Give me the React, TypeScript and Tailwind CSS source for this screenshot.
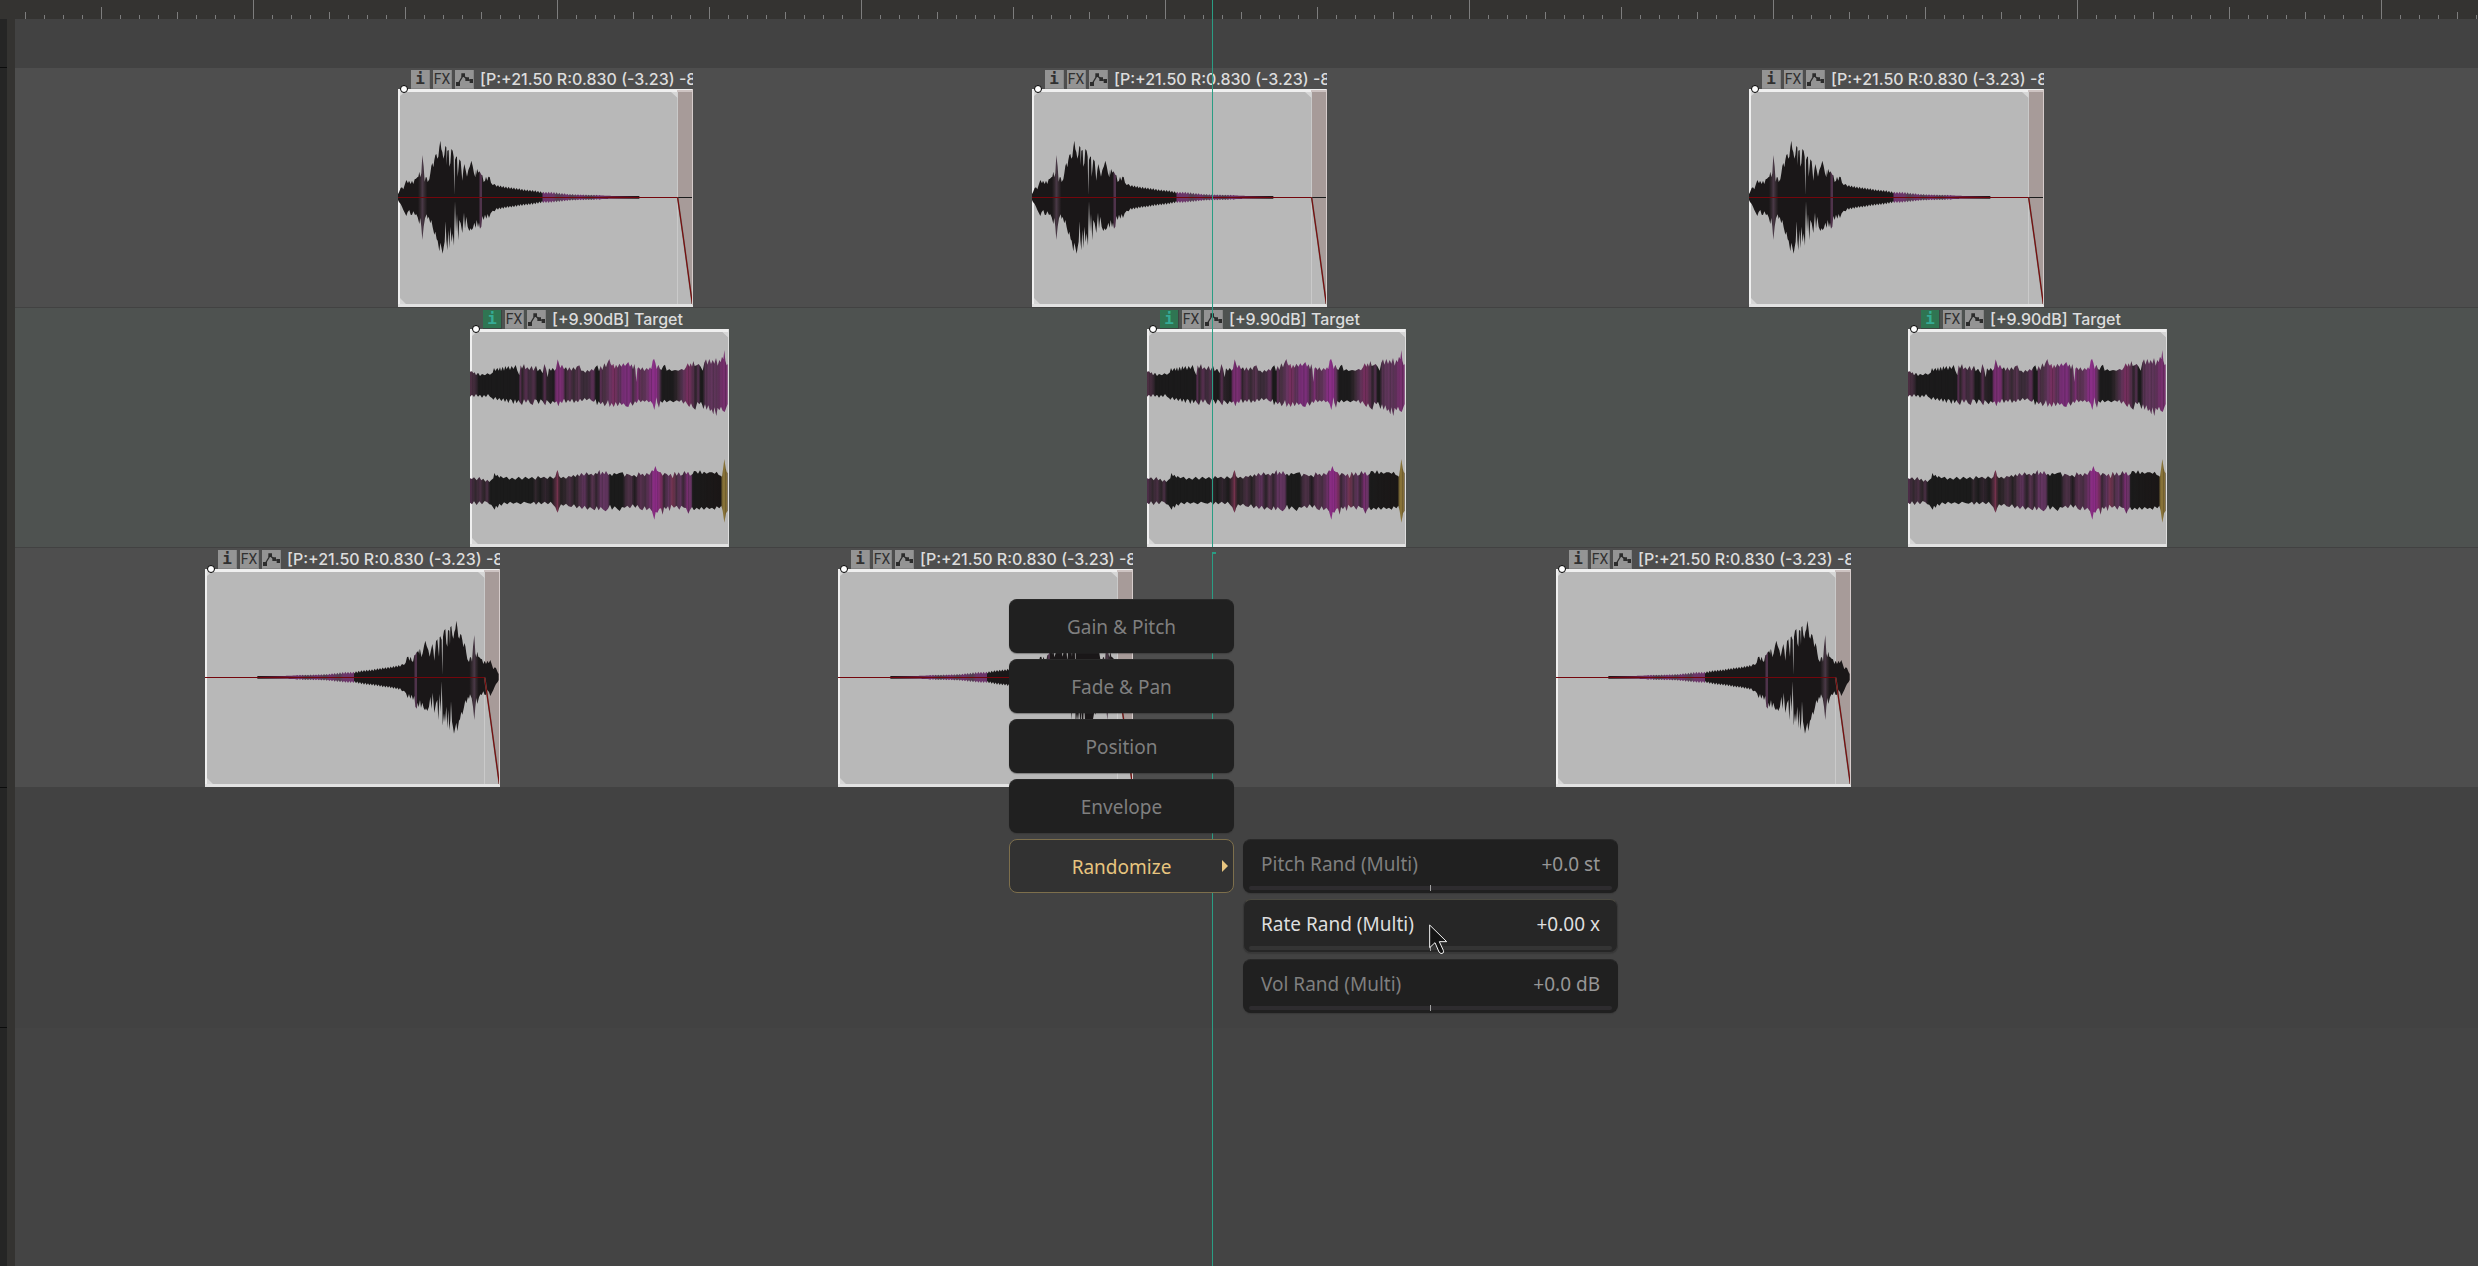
import { clsx } from 'clsx';

type ClipKind = 'impact' | 'reverse' | 'target';
type Stop = [number, string];

// Waveform outlines are "x,y" pairs in thirds of a pixel, the clip's top left corner is (54, 87)
const IMPACT_TOP =
  '54,402 57,397 62,384 66,382 70,388 74,375 79,360 84,370 87,362 92,372 96,362 100,372 104,358 108,356 112,352 115,350 118,335 121,352 124,340 127,285 131,320 134,365 137,352 140,352 143,366 148,358 151,340 154,318 157,309 160,322 163,300 166,285 169,282 172,296 175,290 178,262 181,242 184,268 187,276 190,296 193,285 196,258 199,262 200,315 202,272 206,270 208,320 211,310 214,267 218,272 221,290 223,404 225,300 229,289 231,292 233,350 235,330 238,298 242,304 247,362 250,330 253,312 257,330 261,350 265,330 270,318 274,302 278,318 282,340 286,352 288,328 290,345 292,326 295,338 298,334 301,338 304,344 307,346 311,366 315,362 318,350 322,362 325,350 329,351 333,368 338,375 344,372';
const IMPACT_BOTTOM =
  '54,420 57,426 62,432 66,440 70,450 75,460 79,468 83,456 88,450 92,464 96,465 100,454 105,465 109,463 113,472 118,492 121,474 124,500 127,540 131,500 135,475 140,463 143,477 146,470 151,490 154,480 158,502 163,524 166,515 170,538 173,542 178,574 181,548 184,562 188,581 191,562 194,545 197,484 199,540 202,571 205,510 208,565 211,500 215,547 218,520 222,557 223,500 225,424 228,516 231,462 235,541 238,480 242,490 247,519 252,458 255,507 259,470 263,500 268,513 272,505 275,511 279,504 283,488 287,504 290,480 294,502 297,488 300,506 304,500 307,468 311,480 315,464 319,476 323,462 327,474 332,460 338,452 344,454';

const LEFT_TOP =
  '60,215 66,214 70,220 74,217 78,226 84,218 90,228 96,222 105,226 112,220 120,224 128,218 132,204 136,213 142,204 146,212 150,202 153,214 158,200 162,212 166,198 170,208 175,198 180,210 185,198 190,207 197,195 202,212 208,226 212,196 216,206 222,192 226,208 232,202 238,210 245,198 250,212 258,197 263,214 270,206 278,220 283,192 288,206 293,232 297,205 303,212 308,204 314,212 318,206 323,178 327,192 331,204 336,194 342,208 348,202 353,212 358,202 364,212 370,202 376,210 380,200 388,196 394,212 400,212 406,218 412,210 418,215 425,207 430,212 436,202 442,196 447,214 452,198 457,210 463,190 468,202 472,190 478,177 482,192 486,197 490,191 494,206 498,194 503,203 508,191 514,200 520,190 525,198 530,192 535,186 540,200 545,193 549,208 553,192 556,208 559,246 562,206 566,202 572,210 577,202 583,213 590,204 595,210 600,202 604,208 608,182 612,176 616,188 620,207 625,194 630,207 634,210 640,198 645,194 650,212 658,208 665,213 675,210 685,212 695,207 702,211 708,202 713,190 718,200 722,190 726,200 730,183 734,198 740,196 746,192 752,200 758,212 763,188 768,178 772,194 778,177 783,192 788,180 793,191 798,174 803,197 808,180 812,187 816,170 820,178 823,150 826,182 830,196 833,192';
const LEFT_BOTTOM =
  '60,290 66,284 72,291 78,282 84,290 90,284 96,293 102,285 108,291 114,282 120,290 126,294 130,299 136,291 142,301 148,294 154,303 160,295 165,306 170,296 175,309 180,297 185,300 190,312 195,298 200,310 205,300 210,308 216,315 222,298 228,308 234,298 240,310 248,315 254,298 260,300 266,312 272,298 278,304 283,312 286,316 290,300 296,306 302,313 308,303 314,308 320,304 325,319 330,304 336,309 342,296 348,309 354,299 360,306 366,296 372,309 378,301 384,307 390,296 396,304 404,294 410,301 418,295 426,303 432,305 437,297 441,316 446,304 452,313 458,305 464,319 470,310 474,300 479,321 485,309 491,321 497,306 503,319 509,307 515,315 521,310 527,319 535,321 541,306 548,317 555,304 560,309 566,298 572,307 578,301 584,305 590,300 596,307 602,303 608,312 613,330 617,308 619,292 622,308 627,323 631,303 637,308 643,299 650,307 660,301 670,307 680,301 688,305 694,299 700,311 706,303 712,313 718,321 723,310 728,322 736,329 742,306 748,313 753,305 757,316 760,327 765,313 770,329 775,316 780,333 785,328 790,343 793,322 799,348 803,323 808,331 813,320 818,332 824,336 828,325 833,312';
const RIGHT_TOP =
  '60,535 66,537 72,532 80,541 88,531 94,541 100,536 106,545 112,539 118,546 124,540 130,535 133,519 138,529 142,524 148,533 152,528 160,535 170,530 178,539 186,533 196,539 206,530 216,539 226,530 236,537 246,531 256,539 264,528 272,535 282,530 292,537 300,529 310,536 316,530 320,516 323,510 327,528 333,535 340,530 348,536 356,528 364,531 370,525 376,531 382,523 388,529 394,519 402,527 410,517 416,525 424,521 430,527 436,519 442,522 448,510 452,525 457,515 463,523 468,513 475,525 480,521 486,528 492,519 500,523 508,519 518,517 524,530 530,521 538,524 546,529 552,525 560,532 566,517 572,525 578,521 584,529 590,519 598,525 606,511 611,514 616,498 621,512 627,516 632,517 638,527 644,519 650,522 656,528 662,521 668,535 674,515 680,527 686,517 692,527 698,524 703,513 709,523 714,515 720,527 728,522 732,513 738,514 744,521 750,511 756,523 762,515 770,521 778,517 786,517 794,521 800,515 806,525 812,527 816,530 820,500 823,477 827,505 830,515 833,520';
const RIGHT_BOTTOM =
  '60,608 66,613 72,604 80,615 88,604 96,613 104,603 112,607 118,613 124,614 128,620 134,629 138,617 143,623 148,611 154,617 162,607 172,613 180,605 190,611 200,607 212,613 222,605 232,609 242,611 252,605 258,614 266,605 274,613 284,605 294,613 302,605 310,615 316,622 320,632 323,638 327,625 333,613 340,617 348,611 356,619 364,621 372,613 380,625 388,617 396,627 404,617 412,629 420,621 428,627 434,631 440,619 446,631 452,621 460,629 467,634 474,626 480,614 486,629 494,619 502,627 509,633 516,621 524,623 532,617 540,625 548,613 556,623 562,615 570,627 577,631 584,619 590,631 598,623 606,634 613,659 617,636 622,638 628,626 633,625 638,644 642,621 648,627 654,619 659,633 664,614 672,623 680,617 688,629 694,617 702,623 708,624 715,641 720,630 726,621 732,631 740,623 748,629 754,621 762,629 770,621 778,627 786,623 794,629 800,619 808,625 814,617 818,632 823,668 828,640 833,632';

const IMPACT_STOPS: Stop[] = [
  [54, '#1a1718'], [114, '#1a1718'], [122, '#33292f'], [127, '#4a3947'], [134, '#33292f'], [142, '#1a1718'],
  [298, '#1a1718'], [299, '#4f334b'], [306, '#4f334b'], [307, '#1a1718'],
  [487, '#1a1718'], [488, '#6c336b'], [520, '#6a3768'], [532, '#503f50'], [560, '#6c336b'],
  [575, '#503f50'], [600, '#6c336b'], [630, '#4b3a4b'], [655, '#6c336b'], [700, '#5a1a3c'], [778, '#1a1718'],
];
const LEFT_STOPS: Stop[] = [
  [60, '#533248'], [78, '#3a2836'], [86, '#1b1a1b'], [206, '#1b1a1b'], [210, '#5b2f54'], [218, '#2d2529'],
  [226, '#5a3052'], [240, '#3a2a38'], [252, '#57324f'], [262, '#1b1a1b'], [276, '#1b1a1b'], [284, '#5a3052'],
  [292, '#2a2228'], [312, '#1f1b1e'], [318, '#7a2e72'], [338, '#7a2e72'], [346, '#33262f'], [360, '#583050'],
  [370, '#372a33'], [386, '#593451'], [396, '#3c2c3a'], [412, '#3c2c3a'], [430, '#5f3059'], [438, '#1a1a1a'],
  [447, '#1a1a1a'], [452, '#5c2f55'], [462, '#45303f'], [480, '#6b3765'], [492, '#7a2e60'], [506, '#5c3457'],
  [520, '#7b2e7a'], [540, '#7b2e7a'], [550, '#4a3045'], [562, '#7b2e72'], [574, '#57314e'], [590, '#6b3765'],
  [604, '#8b2e88'], [620, '#8b2e88'], [628, '#5c3457'], [636, '#1c1b1c'], [668, '#1c1b1c'], [682, '#33282f'],
  [698, '#5c3457'], [714, '#7a2e60'], [730, '#54304c'], [738, '#2a2228'], [744, '#5c3457'], [752, '#1c1b1c'],
  [758, '#1c1b1c'], [766, '#553350'], [782, '#63365e'], [800, '#5c3457'], [818, '#78306f'], [834, '#78306f'],
];
const RIGHT_STOPS: Stop[] = [
  [60, '#553050'], [76, '#33282f'], [90, '#4b3045'], [102, '#2d2529'], [112, '#4b3045'], [120, '#1b1b1b'],
  [248, '#1b1b1b'], [256, '#33282f'], [270, '#1b1b1b'], [286, '#332630'], [304, '#1b1b1b'], [316, '#4b2a3a'],
  [322, '#7a3450'], [332, '#252122'], [346, '#33282f'], [360, '#4b3045'], [374, '#252122'], [388, '#4b3045'],
  [402, '#633560'], [416, '#2b2329'], [428, '#593451'], [440, '#332630'], [452, '#633560'], [474, '#633560'],
  [480, '#1b1b1b'], [518, '#1b1b1b'], [530, '#4b3045'], [544, '#4b3045'], [554, '#1f1b1e'], [568, '#583050'],
  [586, '#4b3045'], [604, '#73306e'], [612, '#8e2c88'], [622, '#8e2c88'], [634, '#7a2e60'], [642, '#3a2836'],
  [656, '#633560'], [668, '#75344f'], [680, '#4b3045'], [692, '#633560'], [700, '#3a2836'], [712, '#7a2e72'],
  [724, '#633560'], [728, '#1b1b1b'], [812, '#1b1616'], [818, '#8a7438'], [829, '#8a7438'], [833, '#5f4f38'],
];

// The decaying tail keeps shrinking towards the middle line at y = 412
const TAIL: [number, number][] = [
  [350, 35], [380, 29], [400, 27], [430, 22], [460, 19], [487, 14], [510, 14], [540, 11], [570, 8], [600, 7], [650, 6], [700, 4], [740, 4], [778, 4],
];

function tail(direction: 1 | -1) {
  const points: string[] = [];
  for (let i = 0; i <= 107; i++) {
    const x = 350 + i * 4;
    const next = Math.max(1, TAIL.findIndex(([tx]) => tx >= x));
    const [x0, h0] = TAIL[next - 1];
    const [x1, h1] = TAIL[next];
    const height = h0 + ((h1 - h0) * (x - x0)) / (x1 - x0);
    const jag = x > 660 ? 0 : (i % 2 ? 1 : -1) * Math.min(3, height / 4);
    points.push(`${x},${412 + direction * (height + jag)}`);
  }
  return points.join(' ');
}

function outline(top: string, bottom: string) {
  return `${top} ${bottom.split(' ').reverse().join(' ')}`;
}

function Gradient({ id, stops }: { id: string; stops: Stop[] }) {
  const first = stops[0][0];
  const last = stops[stops.length - 1][0];
  return (
    <linearGradient id={id} gradientUnits="userSpaceOnUse" x1={first} x2={last} y1="0" y2="0">
      {stops.map(([x, color]) => (
        <stop key={x} offset={(x - first) / (last - first)} stopColor={color} />
      ))}
    </linearGradient>
  );
}

/** Shapes shared by all the clips, drawn with <use>. */
function WaveDefs() {
  const left = outline(LEFT_TOP, LEFT_BOTTOM);
  const right = outline(RIGHT_TOP, RIGHT_BOTTOM);
  return (
    <svg className="absolute size-0" aria-hidden="true">
      <defs>
        <Gradient id="impact-fill" stops={IMPACT_STOPS} />
        <Gradient id="left-fill" stops={LEFT_STOPS} />
        <Gradient id="right-fill" stops={RIGHT_STOPS} />
        <pattern id="streaks" width="37" height="900" patternUnits="userSpaceOnUse">
          <path d="M2 0h2v900h-2zM11 0h3v900h-3zM22 0h2v900h-2zM29 0h3v900h-3z" fill="#111" fillOpacity="0.25" />
        </pattern>
        <polygon
          id="impact-wave"
          points={outline(`${IMPACT_TOP} ${tail(-1)}`, `${IMPACT_BOTTOM} ${tail(1)}`)}
          fill="url(#impact-fill)"
        />
        <g id="target-wave">
          <polygon points={left} fill="url(#left-fill)" />
          <polygon points={left} fill="url(#streaks)" />
          <polygon points={right} fill="url(#right-fill)" />
          <polygon points={right} fill="url(#streaks)" />
        </g>
      </defs>
    </svg>
  );
}

function ImpactArt({ reversed }: { reversed: boolean }) {
  return (
    <svg viewBox="54 87 885 654" className="block h-[218px] w-[295px]" aria-hidden="true">
      <rect x="54" y="87" width="885" height="654" fill="#b8b8b8" />
      <path d="M891 87H936V732L892 412Z" fill="#a79b99" />
      <rect x="891" y="96" width="3" height="636" fill="#cacaca" />
      <path d="M60 96h14l-14 12zM60 732v-18l18 18zM873 96h20v18z" fill="#d6d6d6" />
      <path d="M54 87H939V96H60V741H54Z" fill="#efefef" />
      <use href="#impact-wave" transform={reversed ? 'translate(989 0) scale(-1 1)' : undefined} />
      {!reversed && <rect x="892" y="411" width="44" height="3" fill="#1c1c1c" />}
      <rect x="54" y="411" width="839" height="3" fill="#74060c" />
      <path d="M893 413L911 540L937 732" fill="none" stroke="#6d6258" strokeWidth="5" />
      <path d="M893 413L911 540L937 732" fill="none" stroke="#7c0509" strokeWidth="3" />
      <rect x="891" y="90" width="45" height="6" fill="#cdc3c2" />
      <rect x="54" y="732" width="885" height="9" fill="#e2e2e2" />
      <rect x="936" y="87" width="3" height="648" fill="#d6cccb" />
    </svg>
  );
}

function TargetArt() {
  return (
    <svg viewBox="60 87 777 654" className="block h-[218px] w-[259px]" aria-hidden="true">
      <rect x="60" y="87" width="777" height="654" fill="#b8b8b8" />
      <path d="M66 96h14l-14 12zM66 732v-18l18 18zM817 96h17v16z" fill="#d6d6d6" />
      <path d="M60 87H837V96H66V741H60Z" fill="#efefef" />
      <use href="#target-wave" />
      <rect x="60" y="732" width="777" height="9" fill="#e2e2e2" />
      <rect x="834" y="87" width="3" height="654" fill="#dedede" />
    </svg>
  );
}

const badge = 'flex size-[19px] shrink-0 items-center justify-center overflow-hidden border-r border-b';

function Clip({ kind, left }: { kind: ClipKind; left: number }) {
  const isTarget = kind === 'target';
  return (
    <article className={clsx('absolute top-0', isTarget ? 'w-[259px]' : 'w-[295px]')} style={{ left }}>
      <header className="flex h-[21px] items-end gap-[3px] overflow-hidden pr-px pl-[13px]">
        <button
          type="button"
          aria-label="Item info"
          className={clsx(
            badge,
            "font-['DejaVu_Sans_Mono',monospace] text-[16px] leading-4 font-bold",
            isTarget ? 'border-[#3c4441] bg-[#2f7552] text-[#35ab95]' : 'border-[#858585] bg-[#949494] text-[#303030]',
          )}
        >
          i
        </button>
        <button
          type="button"
          aria-label="Item effects"
          className={clsx(badge, 'border-[#858585] bg-[#949494] font-[Roboto,sans-serif] text-[14px] leading-4 text-[#303030]')}
        >
          FX
        </button>
        <button type="button" aria-label="Item envelopes" className={clsx(badge, 'border-[#858585] bg-[#949494]')}>
          <svg viewBox="0 0 57 57" className="size-[19px] shrink-0" aria-hidden="true">
            <path d="M9 42L24 17L38 28L50 33" fill="none" stroke="#2c2c2c" strokeWidth="4" />
            <path d="M3 36h12v12H3zM19 10h11v11H19zM31 22h11v11H31zM44 27h11v12H44z" fill="#2c2c2c" />
          </svg>
        </button>
        <h3 className="ml-[3px] text-[16px] leading-5 font-medium whitespace-nowrap text-[#dcdcdc]">
          {isTarget ? '[+9.90dB] Target' : '[P:+21.50 R:0.830 (-3.23) -8'}
        </h3>
      </header>
      {isTarget ? <TargetArt /> : <ImpactArt reversed={kind === 'reverse'} />}
      <span className="absolute top-[17px] left-[2px] size-2 rounded-full border border-black bg-white" />
    </article>
  );
}

const TRACKS: { name: string; kind: ClipKind; clips: number[]; className: string }[] = [
  { name: 'Track 1', kind: 'impact', clips: [383, 1017, 1734], className: 'bg-[#4e4e4e] border-[#424242]' },
  { name: 'Track 2', kind: 'target', clips: [455, 1132, 1893], className: 'bg-[#4e5250] border-[#424242]' },
  { name: 'Track 3', kind: 'reverse', clips: [190, 823, 1541], className: 'bg-[#4e4e4e] border-[#424242]' },
];

function Ruler() {
  return (
    <svg className="block h-[19px] w-full bg-[#343331]" aria-hidden="true">
      <defs>
        <pattern id="ticks" x="25" width="304" height="19" patternUnits="userSpaceOnUse">
          {Array.from({ length: 16 }, (_, i) => {
            const height = i === 12 ? 19 : i === 4 ? 12 : i % 8 === 0 ? 7 : 4;
            return <rect key={i} x={i * 19} y={19 - height} width="1" height={height} fill="#7d7d7d" />;
          })}
        </pattern>
      </defs>
      <rect x="25" width="100%" height="19" fill="url(#ticks)" />
    </svg>
  );
}

const MENU = ['Gain & Pitch', 'Fade & Pan', 'Position', 'Envelope', 'Randomize'];

function Menu() {
  return (
    <nav className="flex w-[225px] flex-col gap-[6px]">
      {MENU.map((label) => {
        const active = label === 'Randomize';
        return (
          <button
            key={label}
            type="button"
            className={clsx(
              'relative h-[54px] rounded-lg border pt-[2px] text-[19px] leading-6',
              active
                ? 'border-[#7d6f4c] bg-[#323232] text-[#e8c57f]'
                : 'border-[#202020] border-t-[#292929] bg-[#202020] text-[#7f7f7f] shadow-[0_1px_1px_#2a2a2a66]',
            )}
          >
            {label}
            {active && (
              <svg viewBox="0 0 6 12" className="absolute top-[20px] right-[5px] h-3 w-[6px]" aria-hidden="true">
                <path d="M0 0L6 6L0 12Z" fill="#e8c57f" />
              </svg>
            )}
          </button>
        );
      })}
    </nav>
  );
}

const SLIDERS = [
  { id: 'pitch', label: 'Pitch Rand (Multi)', value: '+0.0 st' },
  { id: 'rate', label: 'Rate Rand (Multi)', value: '+0.00 x', hover: true },
  { id: 'vol', label: 'Vol Rand (Multi)', value: '+0.0 dB' },
];

function RandomizePanel() {
  return (
    <div className="flex w-[375px] flex-col gap-[6px]">
      {SLIDERS.map(({ id, label, value, hover }) => (
        <div
          key={id}
          className={clsx(
            'flex h-[54px] flex-col rounded-lg border px-[5px] pt-3',
            hover
              ? 'border-[#383838] border-t-[#4b4a41] bg-[#262626] text-[#dedede] shadow-[0_1px_1px_#2a2a2a66]'
              : 'border-[#202020] border-t-[#292929] bg-[#202020] text-[#7f7f7f] shadow-[0_1px_1px_#2a2a2a66]',
          )}
        >
          <div className="flex justify-between px-3 text-[19px] leading-6">
            <label htmlFor={id}>{label}</label>
            <output htmlFor={id} className={hover ? 'text-[#dedede]' : 'text-[#979797]'}>
              {value}
            </output>
          </div>
          <input
            id={id}
            type="range"
            min={-100}
            max={100}
            defaultValue={0}
            className={clsx(
              'mt-[9px] h-[6px] w-full appearance-none bg-transparent outline-none',
              '[&::-webkit-slider-runnable-track]:h-1 [&::-webkit-slider-runnable-track]:rounded-full',
              '[&::-webkit-slider-thumb]:-mt-px [&::-webkit-slider-thumb]:h-[6px] [&::-webkit-slider-thumb]:w-px [&::-webkit-slider-thumb]:appearance-none [&::-webkit-slider-thumb]:bg-[#a0a0a0]',
              hover
                ? '[&::-webkit-slider-runnable-track]:bg-[#343434]'
                : '[&::-webkit-slider-runnable-track]:bg-[#2e2c2f]',
            )}
          />
        </div>
      ))}
    </div>
  );
}

function Pointer() {
  return (
    <svg viewBox="0 0 57 93" className="absolute top-[924px] left-[1429px] h-[31px] w-[19px]" aria-hidden="true">
      <path
        d="M2 3V71L18 56L30 84Q36 92 42 87Q45 84 43 79L31 53H53Z"
        fill="#141414"
        stroke="#f4f4f4"
        strokeWidth="3"
      />
    </svg>
  );
}

export default function App() {
  return (
    <div className="relative flex min-h-screen flex-col overflow-hidden bg-[#444] font-[Inter,sans-serif]">
      <WaveDefs />
      <Ruler />
      <div className="flex grow">
        {/* Edge of the track panel */}
        <div className="flex w-[7px] shrink-0 flex-col bg-[#252525]">
          <div className="h-[49px] border-b border-[#0c0c0c]" />
          <div className="h-[720px] border-b border-[#0c0c0c]" />
          <div className="h-60 border-b border-[#0c0c0c]" />
        </div>
        <div className="w-2 shrink-0 bg-[#343331]" />

        <main className="min-w-0 grow">
          <div className="h-[49px] bg-[#424242]" />
          {TRACKS.map((track) => (
            <section key={track.name} aria-label={track.name} className={clsx('relative h-60 border-b', track.className)}>
              {track.clips.map((left) => (
                <Clip key={left} kind={track.kind} left={left} />
              ))}
            </section>
          ))}
          <div className="h-60 bg-[#424242]" />
        </main>
      </div>

      {/* Playhead, broken at the top of the third track */}
      <div className="absolute top-0 bottom-0 left-[1212px] flex w-1 flex-col">
        <div className="h-[547px] w-px bg-[#2a9d84]" />
        <div className="mt-[5px] h-0.5 bg-[#2a9d84]" />
        <div className="w-px grow bg-[#2a9d84]" />
      </div>

      <div className="absolute top-[599px] left-[1009px] flex items-end gap-[9px] font-['Noto_Sans','Open_Sans',sans-serif]">
        <Menu />
        <div className="-mb-[120px]">
          <RandomizePanel />
        </div>
      </div>
      <Pointer />
    </div>
  );
}
